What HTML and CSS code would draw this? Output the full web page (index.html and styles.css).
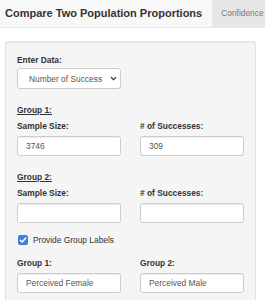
FILE: index.html
```html
<!DOCTYPE html>
<html>
<head>
<meta charset="utf-8">
<link rel="stylesheet" href="styles.css">
</head>
<body>
<header class="navbar">
  <div class="brand">Compare Two Population Proportions</div>
  <div class="tab">Confidence</div>
</header>
<main class="main">
  <section class="panel">
    <div class="form-group">
      <div class="label label-tight">Enter Data:</div>
      <div class="select">
        <span class="select-text">Number of Success</span>
        <svg class="chev" width="7" height="5" viewBox="0 0 7 5"><path d="M1 1.2 L3.5 3.6 L6 1.2" fill="none" stroke="#333" stroke-width="1.2"/></svg>
      </div>
    </div>
    <div class="group-head">Group 1:</div>
    <div class="row">
      <div class="form-group">
        <div class="label">Sample Size:</div>
        <div class="input">3746</div>
      </div>
      <div class="form-group">
        <div class="label"># of Successes:</div>
        <div class="input">309</div>
      </div>
    </div>
    <div class="group-head">Group 2:</div>
    <div class="row">
      <div class="form-group">
        <div class="label">Sample Size:</div>
        <div class="input"></div>
      </div>
      <div class="form-group">
        <div class="label"># of Successes:</div>
        <div class="input"></div>
      </div>
    </div>
    <div class="checkbox">
      <span class="box"><svg width="10" height="10" viewBox="0 0 10 10"><path d="M2.3 5.2 L4.2 7 L7.8 3" fill="none" stroke="#fff" stroke-width="1.5" stroke-linecap="round" stroke-linejoin="round"/></svg></span>
      <span class="check-label">Provide Group Labels</span>
    </div>
    <div class="row">
      <div class="form-group">
        <div class="label">Group 1:</div>
        <div class="input">Perceived Female</div>
      </div>
      <div class="form-group">
        <div class="label">Group 2:</div>
        <div class="input">Perceived Male</div>
      </div>
    </div>
  </section>
</main>
</body>
</html>
```

FILE: styles.css
```css
* { box-sizing: border-box; }
html, body { margin: 0; padding: 0; }
body {
  font-family: "Liberation Sans", Arial, sans-serif;
  color: #333;
  background: #fff;
  width: 265px;
  height: 300px;
  overflow: hidden;
}
.navbar {
  display: flex;
  align-items: stretch;
  height: 28px;
  background: #f8f8f8;
  border-bottom: 1px solid #e7e7e7;
  white-space: nowrap;
}
.brand {
  font-size: 11px;
  font-weight: bold;
  color: #333;
  padding: 0 10px 0 5px;
  line-height: 26px;
}
.tab {
  background: #e7e7e7;
  color: #777;
  font-size: 8.4px;
  line-height: 26px;
  padding-left: 9px;
  flex: 1;
  overflow: hidden;
}
.main {
  padding: 13px 9px 0 5px;
}
.panel {
  display: flex;
  flex-direction: column;
  background: #f5f5f5;
  border: 1px solid #e3e3e3;
  border-radius: 3px;
  box-shadow: inset 0 1px 1px rgba(0,0,0,0.05);
  padding: 12px 11px 20px 11px;
  height: 280px;
}
.form-group { margin-bottom: 9px; }
.label {
  font-size: 8.4px;
  font-weight: bold;
  line-height: 12px;
  margin-bottom: 4px;
}
.label-tight { margin-bottom: 2px; }
.select {
  width: 104px;
  height: 21px;
  background: #fff;
  border: 1px solid #ccc;
  border-radius: 3px;
  display: flex;
  align-items: center;
  padding-left: 11px;
  padding-right: 3px;
  font-size: 8.4px;
  color: #555;
}
.select-text {
  flex: 1;
  overflow: hidden;
  white-space: nowrap;
}
.chev { margin-left: 6px; flex: none; }
.group-head {
  font-size: 8.4px;
  font-weight: bold;
  line-height: 12px;
  text-decoration: underline;
  margin: 6px 0 4px;
}
.row {
  display: grid;
  grid-template-columns: 104px 104px;
  column-gap: 19px;
}
.input {
  height: 20px;
  background: #fff;
  border: 1px solid #ccc;
  border-radius: 2.5px;
  box-shadow: inset 0 1px 1px rgba(0,0,0,0.075);
  font-size: 8.4px;
  color: #555;
  line-height: 18px;
  padding-left: 8px;
  white-space: nowrap;
  overflow: hidden;
}
.checkbox {
  display: flex;
  align-items: center;
  height: 12px;
  margin: 3px 0 12px 1px;
  font-size: 8.4px;
  color: #333;
}
.box {
  width: 10px;
  height: 10px;
  border-radius: 2px;
  background: #3d7fd9;
  display: inline-flex;
  margin-right: 5px;
  flex: none;
}
.box svg { display: block; }
```
